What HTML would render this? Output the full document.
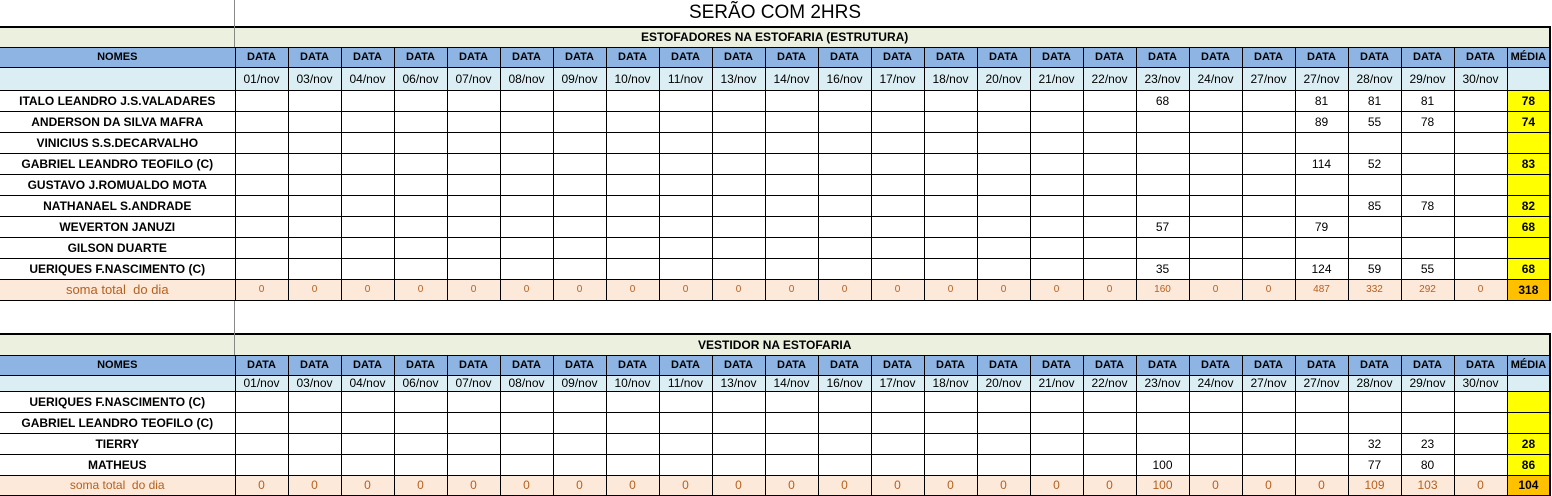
<!DOCTYPE html>
<html><head><meta charset="utf-8"><style>
body{margin:0;width:1552px;height:496px;overflow:hidden;background:#fff;font-family:"Liberation Sans",sans-serif;position:relative}
.vl{position:absolute;left:234px;width:1px;background:#888;z-index:2}
.title{position:absolute;top:2px;left:235px;width:1080px;text-align:center;font-size:19px;color:#000}
table{position:absolute;left:0;border-collapse:collapse;table-layout:fixed;width:1551px}
td{border:1px solid #000;padding:0;text-align:center;font-size:12px;overflow:hidden;white-space:nowrap;color:#000}
tr.g td{background:#ebf1de;font-weight:bold;font-size:12px;border-top:2px solid #000;border-left:none;border-right:2px solid #000}
tr.h td{background:#8db4e2;font-weight:bold;font-size:11px}
tr.d td{background:#daeef3;font-size:12px}
td.n{font-weight:bold;font-size:12px;border-left:none}
td.m{background:#ffff00;font-weight:bold;border-right:2px solid #000}
tr.s td{background:#fde9d9;color:#b5601f;font-size:10px}
tr.s td.n{font-weight:normal;font-size:13px}
tr.s td.m{background:#ffc000;color:#000;font-weight:bold;font-size:12px}
.t2 tr.s td{font-size:12px}
</style></head><body>
<div class="vl" style="top:0;height:47px"></div>
<div class="vl" style="top:301px;height:54px"></div>
<div class="title">SERÃO COM 2HRS</div>
<table style="top:26px">
<colgroup><col style="width:235px"><col span="24" style="width:53px"><col style="width:43px"></colgroup>
<tr class="g" style="height:20px"><td colspan="26">ESTOFADORES NA ESTOFARIA (ESTRUTURA)</td></tr>
<tr class="h" style="height:20px"><td class="n">NOMES</td><td>DATA</td><td>DATA</td><td>DATA</td><td>DATA</td><td>DATA</td><td>DATA</td><td>DATA</td><td>DATA</td><td>DATA</td><td>DATA</td><td>DATA</td><td>DATA</td><td>DATA</td><td>DATA</td><td>DATA</td><td>DATA</td><td>DATA</td><td>DATA</td><td>DATA</td><td>DATA</td><td>DATA</td><td>DATA</td><td>DATA</td><td>DATA</td><td style="border-right:2px solid #000">MÉDIA</td></tr>
<tr class="d" style="height:23px"><td class="n"></td><td>01/nov</td><td>03/nov</td><td>04/nov</td><td>06/nov</td><td>07/nov</td><td>08/nov</td><td>09/nov</td><td>10/nov</td><td>11/nov</td><td>13/nov</td><td>14/nov</td><td>16/nov</td><td>17/nov</td><td>18/nov</td><td>20/nov</td><td>21/nov</td><td>22/nov</td><td>23/nov</td><td>24/nov</td><td>27/nov</td><td>27/nov</td><td>28/nov</td><td>29/nov</td><td>30/nov</td><td class="m"></td></tr>
<tr style="height:21px"><td class="n">ITALO LEANDRO J.S.VALADARES</td><td></td><td></td><td></td><td></td><td></td><td></td><td></td><td></td><td></td><td></td><td></td><td></td><td></td><td></td><td></td><td></td><td></td><td>68</td><td></td><td></td><td>81</td><td>81</td><td>81</td><td></td><td class="m">78</td></tr>
<tr style="height:21px"><td class="n">ANDERSON DA SILVA MAFRA</td><td></td><td></td><td></td><td></td><td></td><td></td><td></td><td></td><td></td><td></td><td></td><td></td><td></td><td></td><td></td><td></td><td></td><td></td><td></td><td></td><td>89</td><td>55</td><td>78</td><td></td><td class="m">74</td></tr>
<tr style="height:21px"><td class="n">VINICIUS S.S.DECARVALHO</td><td></td><td></td><td></td><td></td><td></td><td></td><td></td><td></td><td></td><td></td><td></td><td></td><td></td><td></td><td></td><td></td><td></td><td></td><td></td><td></td><td></td><td></td><td></td><td></td><td class="m"></td></tr>
<tr style="height:21px"><td class="n">GABRIEL LEANDRO TEOFILO (C)</td><td></td><td></td><td></td><td></td><td></td><td></td><td></td><td></td><td></td><td></td><td></td><td></td><td></td><td></td><td></td><td></td><td></td><td></td><td></td><td></td><td>114</td><td>52</td><td></td><td></td><td class="m">83</td></tr>
<tr style="height:21px"><td class="n">GUSTAVO J.ROMUALDO MOTA</td><td></td><td></td><td></td><td></td><td></td><td></td><td></td><td></td><td></td><td></td><td></td><td></td><td></td><td></td><td></td><td></td><td></td><td></td><td></td><td></td><td></td><td></td><td></td><td></td><td class="m"></td></tr>
<tr style="height:21px"><td class="n">NATHANAEL S.ANDRADE</td><td></td><td></td><td></td><td></td><td></td><td></td><td></td><td></td><td></td><td></td><td></td><td></td><td></td><td></td><td></td><td></td><td></td><td></td><td></td><td></td><td></td><td>85</td><td>78</td><td></td><td class="m">82</td></tr>
<tr style="height:21px"><td class="n">WEVERTON JANUZI</td><td></td><td></td><td></td><td></td><td></td><td></td><td></td><td></td><td></td><td></td><td></td><td></td><td></td><td></td><td></td><td></td><td></td><td>57</td><td></td><td></td><td>79</td><td></td><td></td><td></td><td class="m">68</td></tr>
<tr style="height:21px"><td class="n">GILSON DUARTE</td><td></td><td></td><td></td><td></td><td></td><td></td><td></td><td></td><td></td><td></td><td></td><td></td><td></td><td></td><td></td><td></td><td></td><td></td><td></td><td></td><td></td><td></td><td></td><td></td><td class="m"></td></tr>
<tr style="height:21px"><td class="n">UERIQUES F.NASCIMENTO (C)</td><td></td><td></td><td></td><td></td><td></td><td></td><td></td><td></td><td></td><td></td><td></td><td></td><td></td><td></td><td></td><td></td><td></td><td>35</td><td></td><td></td><td>124</td><td>59</td><td>55</td><td></td><td class="m">68</td></tr>
<tr class="s" style="height:21px"><td class="n">soma total&nbsp; do dia</td><td>0</td><td>0</td><td>0</td><td>0</td><td>0</td><td>0</td><td>0</td><td>0</td><td>0</td><td>0</td><td>0</td><td>0</td><td>0</td><td>0</td><td>0</td><td>0</td><td>0</td><td>160</td><td>0</td><td>0</td><td>487</td><td>332</td><td>292</td><td>0</td><td class="m">318</td></tr>
</table>
<table class="t2" style="top:333px">
<colgroup><col style="width:235px"><col span="24" style="width:53px"><col style="width:43px"></colgroup>
<tr class="g" style="height:21px"><td colspan="26">VESTIDOR NA ESTOFARIA</td></tr>
<tr class="h" style="height:20px"><td class="n">NOMES</td><td>DATA</td><td>DATA</td><td>DATA</td><td>DATA</td><td>DATA</td><td>DATA</td><td>DATA</td><td>DATA</td><td>DATA</td><td>DATA</td><td>DATA</td><td>DATA</td><td>DATA</td><td>DATA</td><td>DATA</td><td>DATA</td><td>DATA</td><td>DATA</td><td>DATA</td><td>DATA</td><td>DATA</td><td>DATA</td><td>DATA</td><td>DATA</td><td style="border-right:2px solid #000">MÉDIA</td></tr>
<tr class="d" style="height:16px"><td class="n"></td><td>01/nov</td><td>03/nov</td><td>04/nov</td><td>06/nov</td><td>07/nov</td><td>08/nov</td><td>09/nov</td><td>10/nov</td><td>11/nov</td><td>13/nov</td><td>14/nov</td><td>16/nov</td><td>17/nov</td><td>18/nov</td><td>20/nov</td><td>21/nov</td><td>22/nov</td><td>23/nov</td><td>24/nov</td><td>27/nov</td><td>27/nov</td><td>28/nov</td><td>29/nov</td><td>30/nov</td><td class="m"></td></tr>
<tr style="height:21px"><td class="n">UERIQUES F.NASCIMENTO (C)</td><td></td><td></td><td></td><td></td><td></td><td></td><td></td><td></td><td></td><td></td><td></td><td></td><td></td><td></td><td></td><td></td><td></td><td></td><td></td><td></td><td></td><td></td><td></td><td></td><td class="m"></td></tr>
<tr style="height:21px"><td class="n">GABRIEL LEANDRO TEOFILO (C)</td><td></td><td></td><td></td><td></td><td></td><td></td><td></td><td></td><td></td><td></td><td></td><td></td><td></td><td></td><td></td><td></td><td></td><td></td><td></td><td></td><td></td><td></td><td></td><td></td><td class="m"></td></tr>
<tr style="height:21px"><td class="n">TIERRY</td><td></td><td></td><td></td><td></td><td></td><td></td><td></td><td></td><td></td><td></td><td></td><td></td><td></td><td></td><td></td><td></td><td></td><td></td><td></td><td></td><td></td><td>32</td><td>23</td><td></td><td class="m">28</td></tr>
<tr style="height:21px"><td class="n">MATHEUS</td><td></td><td></td><td></td><td></td><td></td><td></td><td></td><td></td><td></td><td></td><td></td><td></td><td></td><td></td><td></td><td></td><td></td><td>100</td><td></td><td></td><td></td><td>77</td><td>80</td><td></td><td class="m">86</td></tr>
<tr class="s" style="height:20px"><td class="n">soma total&nbsp; do dia</td><td>0</td><td>0</td><td>0</td><td>0</td><td>0</td><td>0</td><td>0</td><td>0</td><td>0</td><td>0</td><td>0</td><td>0</td><td>0</td><td>0</td><td>0</td><td>0</td><td>0</td><td>100</td><td>0</td><td>0</td><td>0</td><td>109</td><td>103</td><td>0</td><td class="m">104</td></tr>
</table>
</body></html>
